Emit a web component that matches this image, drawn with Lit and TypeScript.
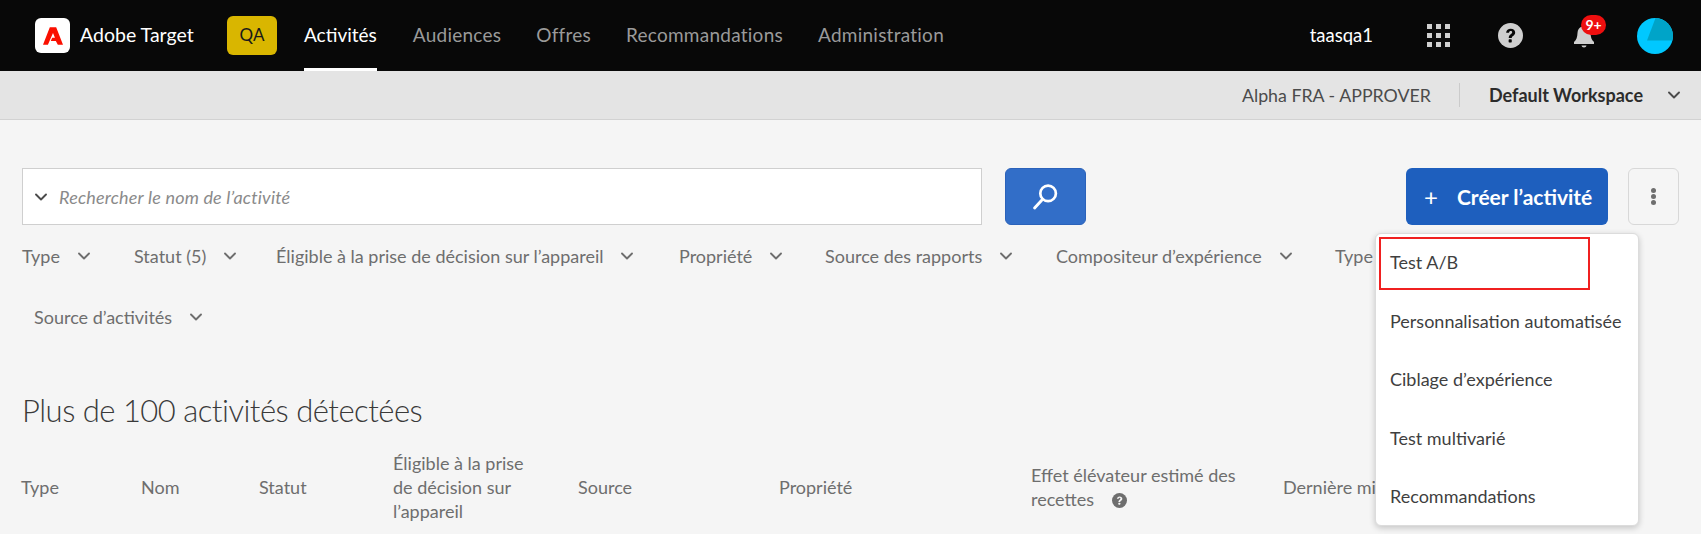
import { css, html, LitElement } from "lit";
import { customElement } from "lit/decorators.js";

const NAV_ITEMS = ["Audiences", "Offres", "Recommandations", "Administration"];
const FILTERS_ROW_1 = [
    { label: "Type", width: 112 },
    { label: "Statut (5)", width: 142 },
    { label: "Éligible à la prise de décision sur l’appareil", width: 403 },
    { label: "Propriété", width: 146 },
    { label: "Source des rapports", width: 231 },
    { label: "Compositeur d’expérience", width: 279 },
];
const MENU_ITEMS = ["Test A/B", "Personnalisation automatisée", "Ciblage d’expérience", "Test multivarié", "Recommandations"];

const chevron = html`<svg class="chevron" viewBox="0 0 12 8"><path d="M1 1.5l5 5 5-5" fill="none" stroke="currentColor" stroke-width="1.9" stroke-linecap="round" stroke-linejoin="round"/></svg>`;

const helpIcon = html`<svg viewBox="0 0 24 24" width="100%" height="100%">
    <circle cx="12" cy="12" r="12" fill="currentColor"/>
    <path d="M7.800 9.300c.2-2.500 2-3.900 4.400-3.900 2.500 0 4.300 1.500 4.300 3.600 0 1.700-1 2.600-2.100 3.400-.9.600-1.200 1-1.200 2h-2.900c0-1.900.7-2.800 1.900-3.700.9-.7 1.400-1.100 1.400-1.800 0-.8-.6-1.200-1.400-1.200-1 0-1.500.6-1.600 1.600z" fill="var(--glyph, #080808)"/>
    <rect x="10.200" y="15.600" width="3" height="3.100" rx=".6" fill="var(--glyph, #080808)"/>
</svg>`;

@customElement("app-root")
export class AppRoot extends LitElement {
    render() {
        return html`
    <header class="topbar">
        <div class="logo-box">
            <svg viewBox="0 0 24 21" width="20" height="18"><path fill="#fa0f00" d="M8.200 0h7.600L24 21h-6.200L12 7 5.900 21H0zM11 12.500h3.700l3.100 8.500-2.400-4.600H9.300z"/></svg>
        </div>
        <span class="brand">Adobe Target</span>
        <span class="env">QA</span>
        <nav class="nav">
            <a class="active">Activités</a>
            ${NAV_ITEMS.map(item => html`<a>${item}</a>`)}
        </nav>
        <div class="top-right">
            <span class="user">taasqa1</span>
            <div class="apps">${Array.from({ length: 9 }, () => html`<i></i>`)}</div>
            <span class="help">${helpIcon}</span>
            <span class="bell">
                <svg viewBox="0 0 22 24" width="22" height="24"><path fill="#cfcfcf" d="M11 1c1 0 1.700.6 2 1.500 3 .9 4.300 3.300 4.500 6.500.2 3.500.9 7.200 3.500 9v2H1v-2c2.600-1.800 3.300-5.500 3.500-9 .2-3.200 1.500-5.600 4.500-6.500.3-.9 1-1.500 2-1.500z"/><path fill="#cfcfcf" d="M8.500 21.500h5c-.2 1.100-1.200 2-2.500 2s-2.300-.9-2.500-2z"/></svg>
                <span class="count">9+</span>
            </span>
            <svg class="avatar" viewBox="0 0 36 36" width="36" height="36">
                <circle cx="18" cy="18" r="18" fill="#00c8ff"/>
                <path fill="#00a4c8" d="M18.500 0 10 22.500h25.200A18 18 0 0 0 36 18 18 18 0 0 0 18.500 0z"/>
            </svg>
        </div>
    </header>
    <div class="subbar">
        <span class="role">Alpha FRA - APPROVER</span>
        <span class="divider"></span>
        <span class="workspace">Default Workspace</span>
        ${chevron}
    </div>
    <main class="content">
        <div class="search-row">
            <div class="search-box">
                ${chevron}
                <span class="placeholder">Rechercher le nom de l’activité</span>
            </div>
            <button class="search-btn">
                <svg viewBox="0 0 26 26" width="27" height="27"><circle cx="15.500" cy="10" r="7.500" fill="none" stroke="#fff" stroke-width="2.600"/><path d="M10 15.800 2.500 24" stroke="#fff" stroke-width="2.800" stroke-linecap="round"/></svg>
            </button>
            <button class="create-btn"><span class="plus">+</span>Créer l’activité</button>
            <button class="more-btn"><i></i><i></i><i></i></button>
        </div>
        <div class="filters">
            ${FILTERS_ROW_1.map(f => html`<span class="filter" style="width:${f.width}px">${f.label}${chevron}</span>`)}
            <span class="filter">Type</span>
        </div>
        <div class="filters second"><span class="filter">Source d’activités${chevron}</span></div>
        <h1>Plus de 100 activités détectées</h1>
        <div class="table-head">
            <span>Type</span>
            <span>Nom</span>
            <span>Statut</span>
            <span class="wrap">Éligible à la prise de décision sur l’appareil</span>
            <span>Source</span>
            <span>Propriété</span>
            <span class="wrap">Effet élévateur estimé des recettes<b class="mini-help">${helpIcon}</b></span>
            <span class="clipped">Dernière mise à jour</span>
        </div>
    </main>
    <div class="menu">
        ${MENU_ITEMS.map(item => html`<div class="menu-item">${item}</div>`)}
        <div class="highlight"></div>
    </div>
        `;
    }

    static styles = css`
        :host {
            display: block;
            position: relative;
            height: 534px;
            overflow: hidden;
            background: #f5f5f5;
            font-family: Lato, "Liberation Sans", sans-serif;
            font-size: 18px;
            color: #6e6e6e;
        }
        .topbar {
            display: flex;
            align-items: center;
            height: 71px;
            padding: 0 28px 0 35px;
            box-sizing: border-box;
            background: #080808;
        }
        .logo-box {
            display: flex;
            align-items: center;
            justify-content: center;
            width: 35px;
            height: 35px;
            border-radius: 6px;
            background: #fff;
        }
        .brand {
            margin-left: 10px;
            padding-bottom: 3px;
            width: 147px;
            color: #fff;
            font-size: 19.500px;
        }
        .env {
            display: flex;
            align-items: center;
            justify-content: center;
            width: 50px;
            height: 39px;
            padding-bottom: 2px;
            box-sizing: border-box;
            border-radius: 6px;
            background: #d9b600;
            color: #1a1a1a;
            font-size: 17px;
        }
        .nav {
            display: flex;
            align-self: stretch;
            gap: 35px;
            margin-left: 27px;
        }
        .nav a {
            display: flex;
            align-items: center;
            color: #9a9a9a;
            font-size: 19px;
            letter-spacing: 0.25px;
            border-bottom: 3px solid transparent;
        }
        .nav a.active {
            margin-right: 1px;
            color: #fff;
            letter-spacing: 0;
            border-bottom-color: #fff;
        }
        .top-right {
            display: flex;
            align-items: center;
            margin-left: auto;
        }
        .user {
            padding-bottom: 2px;
            color: #fff;
            font-size: 18.500px;
        }
        .apps {
            display: grid;
            grid-template-columns: repeat(3, 5px);
            gap: 4px;
            margin-left: 54px;
        }
        .apps i {
            width: 5px;
            height: 5px;
            background: #cfcfcf;
        }
        .help {
            width: 25px;
            height: 25px;
            margin-left: 48px;
            color: #cfcfcf;
        }
        .bell {
            position: relative;
            display: flex;
            margin-left: 50px;
        }
        .count {
            position: absolute;
            top: -9px;
            left: 8px;
            width: 25px;
            height: 20px;
            line-height: 20px;
            text-align: center;
            border-radius: 10px;
            background: #ee0f0f;
            color: #fff;
            font-size: 14px;
            font-weight: 700;
        }
        .avatar {
            margin-left: 42px;
        }
        .subbar {
            display: flex;
            align-items: center;
            justify-content: flex-end;
            height: 49px;
            padding-right: 21px;
            box-sizing: border-box;
            background: #e4e4e4;
            border-bottom: 1px solid #d2d2d2;
            color: #4b4b4b;
        }
        .role {
            font-size: 17.800px;
        }
        .divider {
            width: 1px;
            height: 24px;
            margin: 0 29px 0 28px;
            background: #cbcbcb;
        }
        .workspace {
            color: #2c2c2c;
            font-weight: 700;
            margin-right: 25px;
        }
        .chevron {
            width: 12px;
            height: 8px;
            flex: none;
        }
        .content {
            padding: 48px 22px 0;
        }
        .search-row {
            display: flex;
            align-items: stretch;
            height: 57px;
        }
        .search-box {
            display: flex;
            align-items: center;
            gap: 12px;
            width: 960px;
            padding-left: 12px;
            box-sizing: border-box;
            background: #fff;
            border: 1px solid #cfcfcf;
            color: #4b4b4b;
        }
        .placeholder {
            color: #8a8a8a;
            font-style: italic;
            letter-spacing: 0.18px;
        }
        .search-btn {
            display: flex;
            align-items: center;
            justify-content: center;
            width: 81px;
            margin-left: 23px;
            border: 1px solid #2b62ba;
            border-radius: 6px;
            background: #326ec8;
        }
        .create-btn {
            display: flex;
            align-items: center;
            width: 202px;
            margin-left: 320px;
            padding: 0 0 0 18px;
            border: 0;
            border-radius: 6px;
            background: #1e5fbe;
            color: #fff;
            font: 700 21px Lato, sans-serif;
        }
        .plus {
            width: 33px;
            font-size: 24px;
            font-weight: 400;
            text-align: left;
        }
        .more-btn {
            display: flex;
            flex-direction: column;
            align-items: center;
            justify-content: center;
            gap: 1px;
            width: 51px;
            margin-left: 20px;
            padding: 0;
            background: #f5f5f5;
            border: 1px solid #d8d8d8;
            border-radius: 6px;
        }
        .more-btn i {
            width: 5px;
            height: 5px;
            border-radius: 50%;
            background: #6e6e6e;
        }
        .filters {
            display: flex;
            margin-top: 20px;
            height: 22px;
            line-height: 22px;
        }
        .filters.second {
            margin-top: 39px;
            padding-left: 12px;
        }
        .filter {
            display: flex;
            align-items: center;
            gap: 18px;
            flex: none;
            color: #6e6e6e;
        }
        h1 {
            margin: 62px 0 0;
            color: #3a3a3a;
            font-size: 31px;
            line-height: 40px;
            font-weight: 300;
            letter-spacing: -0.5px;
        }
        .table-head {
            display: grid;
            grid-template-columns: 120px 118px 134px 185px 201px 252px 252px 92px;
            align-items: center;
            margin: 21px 0 0 -1px;
            line-height: 24px;
        }
        .wrap {
            max-width: 150px;
        }
        .table-head .wrap:nth-child(7) {
            max-width: 220px;
        }
        .clipped {
            white-space: nowrap;
            overflow: hidden;
        }
        .mini-help {
            display: inline-block;
            width: 15px;
            height: 15px;
            margin-left: 18px;
            vertical-align: -2px;
            --glyph: #f5f5f5;
        }
        .menu {
            position: absolute;
            left: 1375px;
            top: 233px;
            width: 264px;
            height: 293px;
            box-sizing: border-box;
            background: #fff;
            border: 1px solid #dcdcdc;
            border-radius: 6px;
            box-shadow: 0 2px 6px rgba(0, 0, 0, 0.2);
        }
        .menu-item {
            display: flex;
            align-items: center;
            height: 58.500px;
            padding: 0 0 2px 14px;
            box-sizing: border-box;
            color: #3f3f3f;
        }
        .highlight {
            position: absolute;
            left: 3px;
            top: 3px;
            width: 211px;
            height: 53px;
            box-sizing: border-box;
            border: 2px solid #f02020;
        }
    `;
}

declare global {
    interface HTMLElementTagNameMap {
        "app-root": AppRoot;
    }
}
